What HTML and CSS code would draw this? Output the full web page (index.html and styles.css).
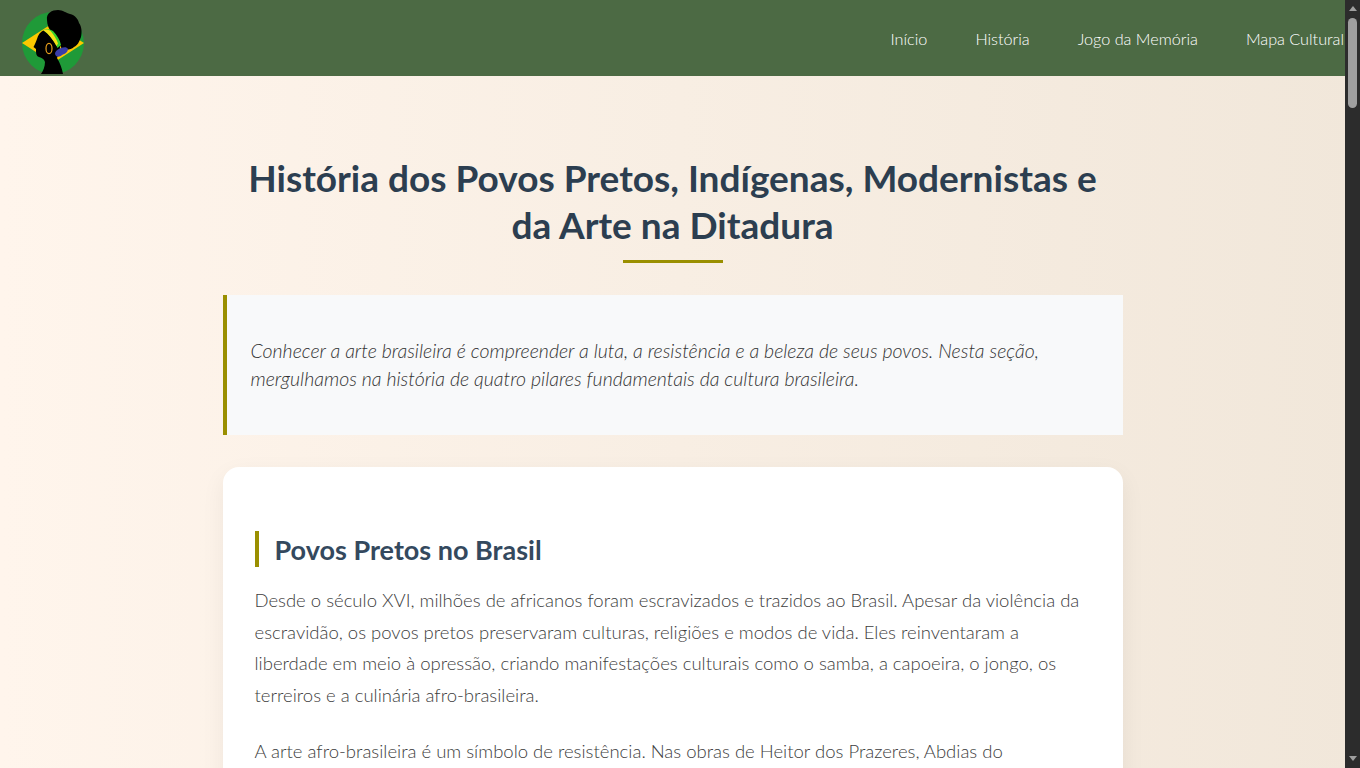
FILE: index.html
```html
<!DOCTYPE html>
<html lang="pt-BR">
<head>
<meta charset="UTF-8" />
<meta name="viewport" content="width=device-width, initial-scale=1" />
<title>História dos Povos</title>
<link rel="stylesheet" href="styles.css">
</head>
<body>
  <header class="site-header">
    <a class="logo" href="#" aria-label="Início">
      <svg width="70" height="72" viewBox="20 2 70 72" aria-hidden="true">
        <circle cx="53" cy="43" r="31" fill="#1f9a38"/>
        <path d="M22 43 L53 23 L84 43 L53 63 Z" fill="#fcc800"/>
        <!-- hair -->
        <path d="M47 20 C46 13 52 10 58 10 C63 10 66 13 70 14 C75 15 78 19 79 23 C82 27 82 33 81 37 C79 42 78 45 74 47 C71 50 66 50 62 49 C60 45 57 40 52 33 C49 29 47 25 47 20 Z" fill="#000"/>
        <!-- face and neck -->
        <path d="M44 30 C40 32 38 35 37 39 C36 42 35 44 33.500 47 L36 49 C36 53 36 56 39 57 C42 58 44 59 45 62 C45 67 43 71 41 74 L63 74 C62 68 60 63 57 58 C60 52 60 48 60 46 L52 34 Z" fill="#000"/>
        <!-- headband -->
        <path d="M43 30 C46 28 50 29 53 31 C57 35 60 40 61 45 L57.500 48 C55 42 50 35 43 30 Z" fill="#35d02c"/>
        <path d="M43 30 C46 29 49 29.500 51 31.500 C54 35 56.500 39 58 43.500 L56.500 46 C53 40 49 34 43 30 Z" fill="#f7e017"/>
        <!-- cloth -->
        <path d="M55 53 C56 50 59 49 61 48 C64 47 67 47 68 49 C68 52 65 54 62 55 C60 57 55 58 55 53 Z" fill="#3a3ea8"/>
        <!-- earring -->
        <ellipse cx="49" cy="48.500" rx="3" ry="5.200" fill="none" stroke="#e8a01c" stroke-width="1.200"/>
      </svg>
    </a>
    <nav class="main-nav">
      <a href="#">Início</a>
      <a href="#">História</a>
      <a href="#">Jogo da Memória</a>
      <a href="#">Mapa Cultural</a>
    </nav>
  </header>

  <main class="content">
    <h1 class="page-title">História dos Povos Pretos, Indígenas, Modernistas e da Arte na Ditadura</h1>

    <p class="intro">Conhecer a arte brasileira é compreender a luta, a resistência e a beleza de seus povos. Nesta seção, mergulhamos na história de quatro pilares fundamentais da cultura brasileira.</p>

    <article class="card">
      <h2>Povos Pretos no Brasil</h2>
      <p>Desde o século XVI, milhões de africanos foram escravizados e trazidos ao Brasil. Apesar da violência da escravidão, os povos pretos preservaram culturas, religiões e modos de vida. Eles reinventaram a liberdade em meio à opressão, criando manifestações culturais como o samba, a capoeira, o jongo, os terreiros e a culinária afro-brasileira.</p>
      <p>A arte afro-brasileira é um símbolo de resistência. Nas obras de Heitor dos Prazeres, Abdias do Nascimento e Rubem Valentim, a ancestralidade ganha forma, cor e movimento.</p>
    </article>
  </main>

  <!-- the browser hides its own scrollbar in the capture, so draw it -->
  <div class="scrollbar" aria-hidden="true">
    <span class="scroll-arrow up"></span>
    <span class="scroll-thumb"></span>
    <span class="scroll-arrow down"></span>
  </div>
</body>
</html>
```

FILE: styles.css
```css
* {
  box-sizing: border-box;
}
body {
  margin: 0 15px 0 0;
  font-family: Lato, "Open Sans", sans-serif;
  background: linear-gradient(90deg, #fff5ec, #f1e7da);
  color: #2c3e50;
}
.scrollbar {
  position: fixed;
  top: 0;
  right: 0;
  bottom: 0;
  width: 15px;
  display: flex;
  flex-direction: column;
  align-items: center;
  background: #2c2c2c;
}
.scroll-thumb {
  width: 9px;
  height: 90px;
  border-radius: 5px;
  background: #9f9f9f;
}
.scroll-arrow {
  width: 0;
  height: 0;
  border-left: 4.500px solid transparent;
  border-right: 4.500px solid transparent;
}
.scroll-arrow.up {
  margin: 6px 0 7px;
  border-bottom: 5px solid #9f9f9f;
}
.scroll-arrow.down {
  margin-top: auto;
  margin-bottom: 7px;
  border-top: 5px solid #9f9f9f;
}
.site-header {
  display: flex;
  justify-content: space-between;
  align-items: center;
  height: 76px;
  background: #4c6a44;
  padding: 0 1px 0 20px;
}
.logo {
  display: flex;
}
.main-nav {
  display: flex;
  gap: 48px;
}
.main-nav a {
  color: #fff;
  font-size: 16.200px;
  font-weight: 300;
  text-decoration: none;
}
.content {
  width: 900px;
  margin: 0 auto;
  padding-top: 78px;
}
.page-title {
  position: relative;
  margin: 0 0 33px;
  padding: 0 10px 14px;
  font-size: 37px;
  font-weight: 700;
  line-height: 47px;
  text-align: center;
}
.page-title::after {
  content: "";
  position: absolute;
  left: 400px;
  bottom: -1px;
  width: 100px;
  height: 3px;
  background: #9a8f00;
}
.intro {
  margin: 0 0 32px;
  padding: 42px 24px 42px;
  border-left: 4px solid #9a8f00;
  background: #f8f9fa;
  color: #333;
  font-size: 19.500px;
  font-style: italic;
  font-weight: 300;
  line-height: 28px;
}
.card {
  padding: 64px 32px 32px;
  border-radius: 16px;
  background: #fff;
  box-shadow: 0 8px 24px rgba(0, 0, 0, 0.06);
}
.card h2 {
  margin: 0 0 18px;
  padding: 2px 0 0 16px;
  border-left: 4px solid #9a8f00;
  color: #34495e;
  font-size: 27px;
  font-weight: 700;
  line-height: 34px;
}
.card p {
  margin: 0 0 24px;
  color: #3d3d3d;
  font-size: 18.500px;
  font-weight: 300;
  line-height: 31.680px;
}
```
